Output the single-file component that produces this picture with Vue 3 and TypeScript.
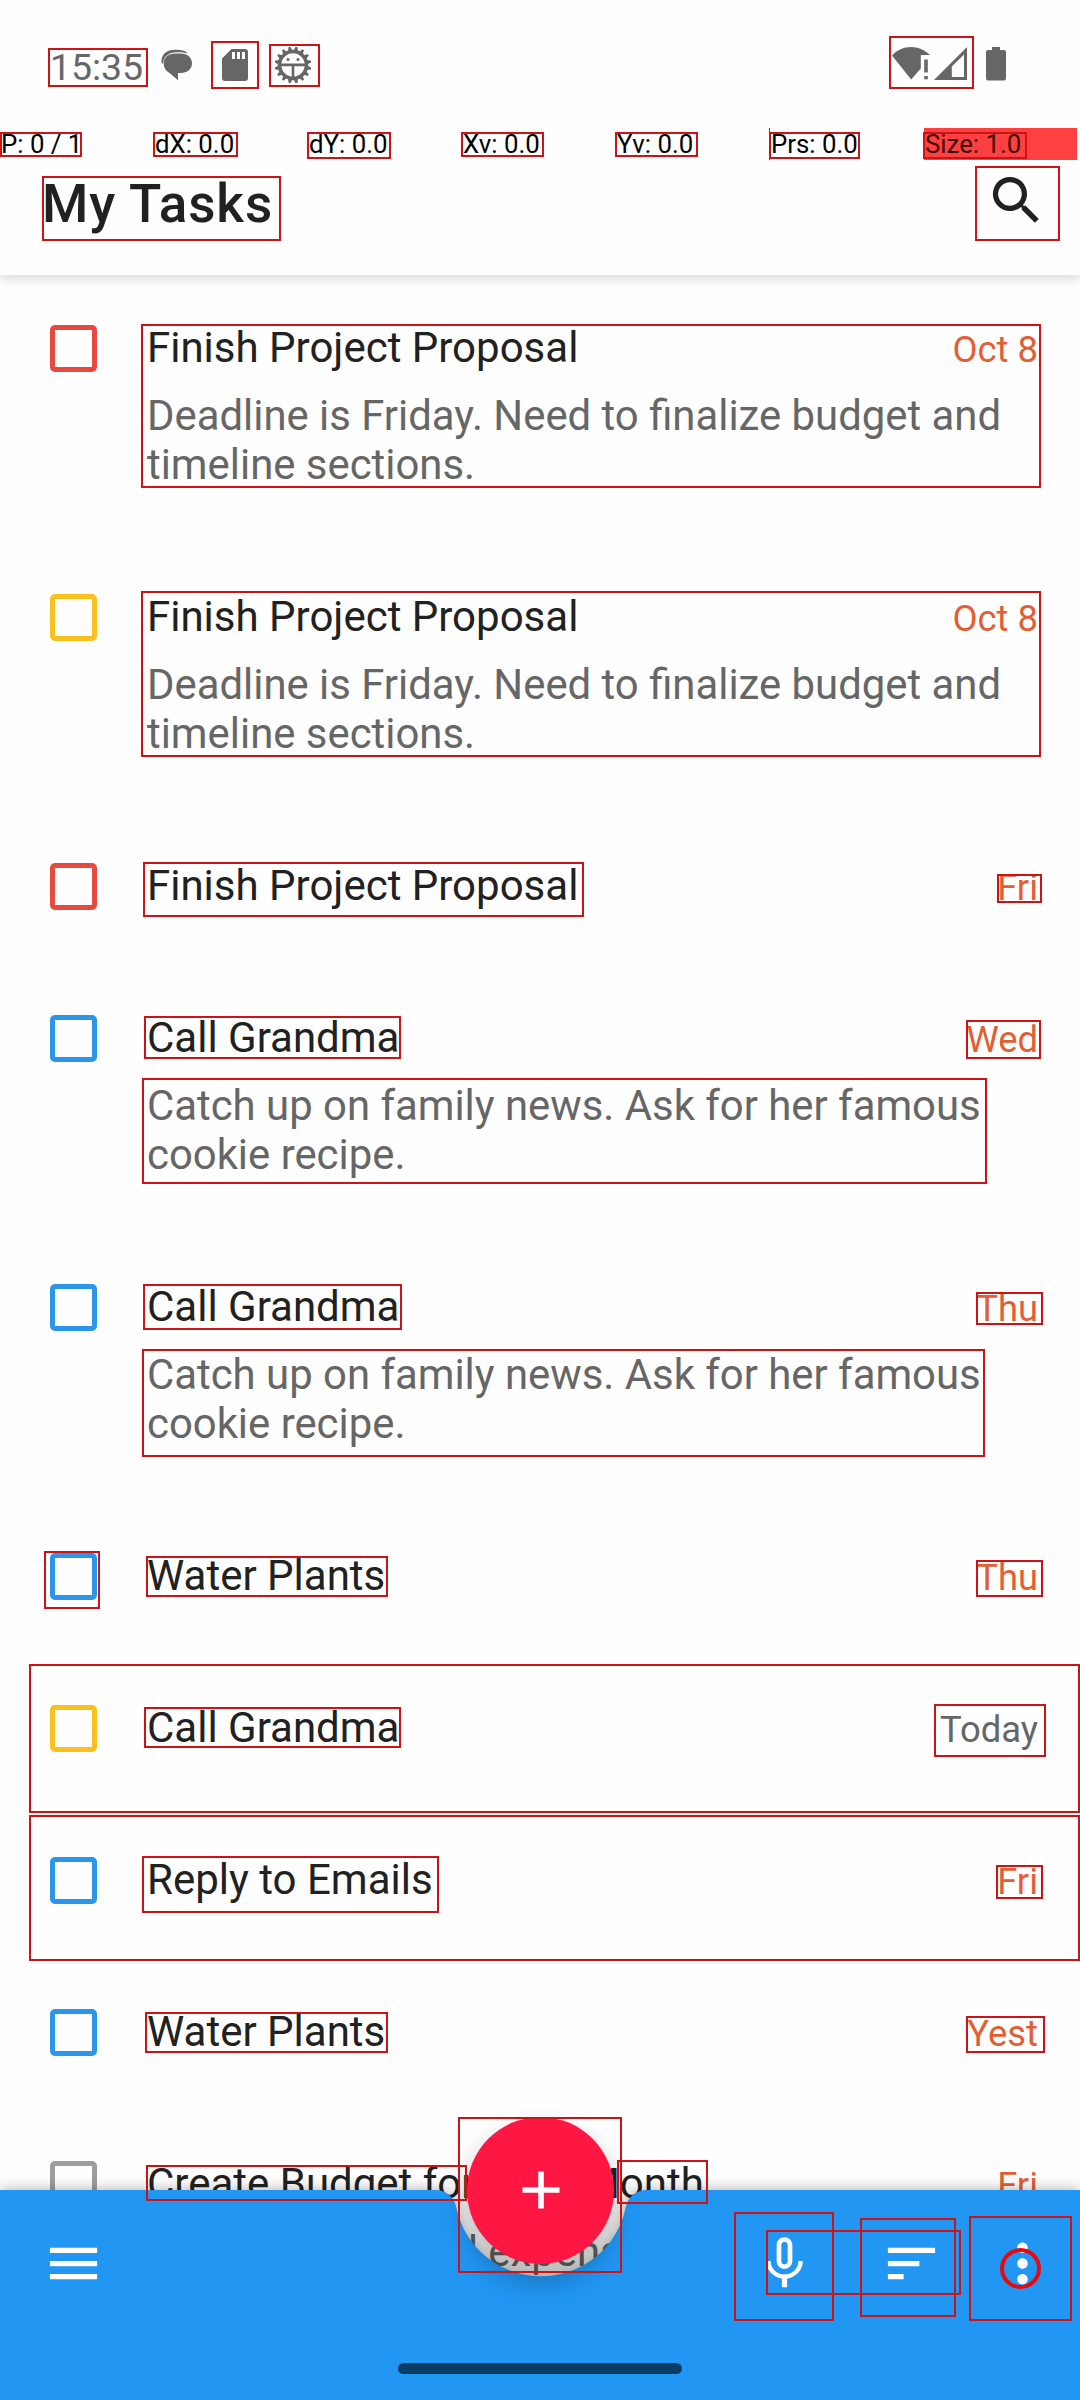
<script setup lang="ts">
interface Task {
  title: string
  due: string
  color: string
  notes?: string
  today?: boolean
}

interface Mark {
  x: number
  y: number
  w: number
  h: number
}

const RED = '#e8493f'
const YELLOW = '#f9c01e'
const BLUE = '#2b95e9'
const GREY = '#9e9e9e'

const proposal = 'Deadline is Friday. Need to finalize budget and timeline sections.'
const grandma = 'Catch up on family news. Ask for her famous cookie recipe.'

const tasks: Task[] = [
  { title: 'Finish Project Proposal', due: 'Oct 8', color: RED, notes: proposal },
  { title: 'Finish Project Proposal', due: 'Oct 8', color: YELLOW, notes: proposal },
  { title: 'Finish Project Proposal', due: 'Fri', color: RED },
  { title: 'Call Grandma', due: 'Wed', color: BLUE, notes: grandma },
  { title: 'Call Grandma', due: 'Thu', color: BLUE, notes: grandma },
  { title: 'Water Plants', due: 'Thu', color: BLUE },
  { title: 'Call Grandma', due: 'Today', color: YELLOW, today: true },
  { title: 'Reply to Emails', due: 'Fri', color: BLUE },
  { title: 'Water Plants', due: 'Yest', color: BLUE },
  { title: 'Create Budget for Next Month', due: 'Fri', color: GREY, notes: 'Track income and expenses.' },
]

const pointer = ['P: 0 / 1', 'dX: 0.0', 'dY: 0.0', 'Xv: 0.0', 'Yv: 0.0', 'Prs: 0.0', 'Size: 1.0']

// Element bounds drawn above the interface: left, top, right, bottom
const bounds: number[][] = [
  [48, 48, 148, 87], [211, 41, 259, 89], [269, 44, 320, 87], [889, 36, 974, 89],
  [0, 132, 82, 157], [153, 132, 238, 157], [307, 132, 391, 159], [461, 132, 544, 157],
  [615, 132, 698, 157], [769, 132, 860, 159], [923, 132, 1027, 159],
  [42, 176, 281, 241], [975, 166, 1060, 241],
  [141, 324, 1041, 488], [141, 591, 1041, 757],
  [143, 862, 584, 917], [997, 874, 1042, 903],
  [144, 1016, 401, 1059], [966, 1020, 1041, 1059], [142, 1078, 987, 1184],
  [143, 1284, 402, 1330], [976, 1292, 1043, 1325], [142, 1349, 985, 1457],
  [44, 1551, 100, 1609], [146, 1556, 388, 1597], [976, 1560, 1043, 1597],
  [29, 1664, 1080, 1813], [144, 1707, 401, 1748], [934, 1704, 1046, 1757],
  [29, 1815, 1080, 1961], [142, 1856, 439, 1913], [996, 1865, 1043, 1899],
  [145, 2012, 388, 2053], [966, 2016, 1045, 2053],
  [146, 2165, 467, 2201], [617, 2160, 708, 2204], [458, 2117, 622, 2273],
  [734, 2212, 834, 2321], [766, 2230, 961, 2295], [860, 2218, 956, 2317], [969, 2216, 1072, 2321],
]
const marks: Mark[] = bounds.map(([l, t, r, b]) => ({ x: l, y: t, w: r - l, h: b - t }))

const teeth = Array.from({ length: 16 }, (_, i) => i * 22.5 + 11.25)
</script>

<template>
  <div class="screen">
    <div class="status">
      <span class="clock">15:35</span>
      <svg class="chat" width="32" height="32" viewBox="0 0 32 32">
        <path d="M0.6 14.5C-0.6 6 5 0.8 14 0.8c6 0 11 1 12.500 3.600C23 3.300 19 3 15.500 3.200 8 3.400 2.600 7 1.900 14.500z" />
        <path d="M14.500 4.600h5C26.500 4.600 31 8.600 31 14.300S26.500 24 19.500 24H17v7.200L8.500 24C4.800 22 2.600 18.600 2.600 14.300c0-5.700 4.900-9.700 11.900-9.700z" />
      </svg>
      <svg class="sd" width="26" height="32" viewBox="0 0 26 32">
        <path fill-rule="evenodd" d="M9.500 0H23a3 3 0 0 1 3 3v26a3 3 0 0 1-3 3H3a3 3 0 0 1-3-3V9.500zM10 3v7h3V3zm5 0v7h3V3zm5 0v7h3V3z" />
      </svg>
      <svg class="gear" width="38" height="38" viewBox="-19 -19 38 38">
        <path v-for="a in teeth" :key="a" d="M-2.200-14 L-1-18.300 H1 L2.200-14z" :transform="`rotate(${a})`" />
        <circle r="13.500" fill="none" stroke="#666" stroke-width="3.600" />
        <path d="M-13-1.400H13V1.200H1.300V13H-1.300V1.200H-13z" />
        <circle cx="-5" cy="-5.500" r="1.500" /><circle cx="5" cy="-5.500" r="1.500" />
      </svg>
      <span class="spacer"></span>
      <svg class="wifi" width="38" height="34" viewBox="0 0 38 34">
        <path d="M0 9.500C5 4 11.500 1 19 1s14 3 19 8H28.800v13.500L19.200 33.500z" />
        <path d="M32.200 13.500h3.600v13h-3.600zM32.200 30h3.600v3.200h-3.600z" />
      </svg>
      <svg class="cell" width="33" height="33" viewBox="0 0 33 33">
        <path fill-rule="evenodd" d="M33 0V33H0zM30 7.500L17.800 19.500V30H30z" />
      </svg>
      <svg class="battery" width="20" height="34" viewBox="0 0 20 34">
        <path d="M6 0h8v3h4a2 2 0 0 1 2 2v26.500a2 2 0 0 1-2 2H2a2 2 0 0 1-2-2V5a2 2 0 0 1 2-2h4z" />
      </svg>
    </div>

    <div class="pointer">
      <span v-for="(p, i) in pointer" :key="p" :class="['cell-text', { prs: i === 5, hot: i === 6 }]">{{ p }}</span>
    </div>

    <header class="header">
      <h1>My Tasks</h1>
      <svg width="63" height="63" viewBox="0 0 24 24">
        <path fill="#212121" d="M15.500 14h-.79l-.28-.27A6.471 6.471 0 0 0 16 9.500 6.500 6.500 0 1 0 9.500 16c1.610 0 3.090-.59 4.230-1.570l.27.28v.79l5 4.990L20.490 19l-4.990-5zm-6 0C7.010 14 5 11.990 5 9.500S7.010 5 9.500 5 14 7.010 14 9.500 11.990 14 9.500 14z" />
      </svg>
    </header>

    <ul class="list">
      <li v-for="(t, i) in tasks" :key="i" class="task">
        <span class="box" :style="{ borderColor: t.color }"></span>
        <div class="body">
          <div class="line">
            <span class="title">{{ t.title }}</span>
            <span :class="['due', { today: t.today }]">{{ t.due }}</span>
          </div>
          <p v-if="t.notes" class="notes">{{ t.notes }}</p>
        </div>
      </li>
    </ul>

    <footer class="bottom">
      <svg class="bar" width="1080" height="210" viewBox="0 0 1080 210">
        <path fill="#2196f3" d="M0 0H435.600A21 21 0 0 1 456.200 16.900A86.500 86.500 0 0 0 625.800 16.900A21 21 0 0 1 646.400 0H1080V210H0z" />
      </svg>
      <div class="fab">
        <svg width="38" height="38" viewBox="0 0 38 38"><path d="M16.200 .5h5.600v15.700h15.700v5.600H21.800v15.700h-5.600V21.800H.5v-5.600h15.700z" /></svg>
      </div>
      <div class="actions">
        <svg width="63" height="63" viewBox="0 0 24 24"><path d="M3 18h18v-2H3v2zm0-5h18v-2H3v2zm0-7v2h18V6H3z" /></svg>
        <span class="spacer"></span>
        <svg width="63" height="63" viewBox="0 0 24 24"><path d="M12 14c1.660 0 2.990-1.340 2.990-3L15 5c0-1.660-1.340-3-3-3S9 3.340 9 5v6c0 1.660 1.340 3 3 3zm-1.200-9.100c0-.66.54-1.200 1.200-1.200s1.200.54 1.200 1.200l-.01 6.200c0 .66-.53 1.200-1.190 1.200s-1.200-.54-1.200-1.200V4.900zm6.500 6.100c0 3-2.540 5.100-5.300 5.100S6.700 14 6.700 11H5c0 3.410 2.720 6.230 6 6.720V21h2v-3.280c3.280-.48 6-3.300 6-6.720h-1.700z" /></svg>
        <svg class="sort" width="63" height="63" viewBox="0 0 24 24"><path d="M3 18h6v-2H3v2zM3 6v2h18V6H3zm0 7h12v-2H3v2z" /></svg>
        <svg class="more" width="63" height="63" viewBox="0 0 24 24"><path d="M12 8c1.100 0 2-.9 2-2s-.9-2-2-2-2 .9-2 2 .9 2 2 2zm0 2c-1.100 0-2 .9-2 2s.9 2 2 2 2-.9 2-2-.9-2-2-2zm0 6c-1.100 0-2 .9-2 2s.9 2 2 2 2-.9 2-2-.9-2-2-2z" /></svg>
      </div>
      <div class="handle"></div>
    </footer>

    <div
      v-for="(m, i) in marks"
      :key="i"
      class="mark"
      :style="{ left: m.x + 'px', top: m.y + 'px', width: m.w + 'px', height: m.h + 'px' }"
    ></div>
    <div class="ring"></div>
  </div>
</template>

<style>
body {
  margin: 0;
  background: #fefefe;
}
</style>

<style scoped>
.screen {
  position: relative;
  width: 1080px;
  height: 2400px;
  overflow: hidden;
  background: #fefefe;
  font-family: Roboto, 'Liberation Sans', sans-serif;
  display: flex;
  flex-direction: column;
}
svg {
  display: block;
  flex: none;
}
.spacer {
  flex: 1;
}
.status {
  height: 81px;
  flex: none;
  box-sizing: border-box;
  display: flex;
  align-items: flex-end;
  padding: 0 74px 0 50px;
  margin-bottom: 47px;
  fill: #666;
  color: #666;
}
.clock {
  width: 111px;
  font-size: 37.400px;
  line-height: 44px;
  margin-bottom: -8px;
}
.sd {
  margin-left: 29px;
}
.gear {
  margin: 0 0 -3px 26px;
}
.wifi {
  margin: 0 4px 1px 0;
}
.cell {
  margin: 0 19px 1px 0;
}
.pointer {
  height: 32px;
  flex: none;
  display: flex;
}
.cell-text {
  width: 154px;
  box-sizing: border-box;
  padding-left: 1px;
  font-size: 25.800px;
  line-height: 32px;
  color: #000;
}
.prs {
  box-shadow: -1px 0 0 #a03030;
}
.hot {
  width: 153px;
  background: #ff4040;
  color: #400808;
}
.header {
  height: 115px;
  flex: none;
  box-sizing: border-box;
  display: flex;
  justify-content: space-between;
  padding: 9px 32px 0 42px;
  background: #fefefe;
  box-shadow: 0 3px 12px rgba(0, 0, 0, 0.17);
  clip-path: inset(0 0 -30px 0);
  z-index: 1;
}
h1 {
  margin: 4px 0 0;
  font-size: 53px;
  line-height: 62px;
  font-weight: 500;
  letter-spacing: 0.9px;
  color: #212121;
}
.list {
  margin: 0;
  padding: 0;
  list-style: none;
}
.task {
  display: flex;
  padding: 48px 42px 55px 50px;
}
.box {
  flex: none;
  box-sizing: border-box;
  width: 47px;
  height: 47px;
  margin: 2px 50px 0 0;
  border: 5px solid;
  border-radius: 5px;
  align-self: flex-start;
}
.body {
  flex: 1;
}
.line {
  display: flex;
  justify-content: space-between;
  align-items: baseline;
  height: 49px;
}
.title {
  font-size: 42px;
  line-height: 49px;
  color: #212121;
}
.due {
  font-size: 36.400px;
  line-height: 43px;
  color: #e25f35;
}
.due.today {
  color: #666;
}
.notes {
  margin: 19px 0 0;
  width: 860px;
  font-size: 41.870px;
  line-height: 49px;
  color: #666;
}
.task:not(:last-child) .notes {
  height: 98px;
}
.bottom {
  position: absolute;
  left: 0;
  top: 2190px;
  width: 1080px;
  height: 210px;
  z-index: 2;
}
.bar {
  position: absolute;
  inset: 0;
  overflow: visible;
  filter: drop-shadow(0 0 7px rgba(0, 0, 0, 0.32));
}
.fab {
  position: absolute;
  left: 467px;
  top: -73.500px;
  width: 147px;
  height: 147px;
  border-radius: 50%;
  background: #ff1744;
  box-shadow: 0 16px 28px rgba(0, 0, 0, 0.28);
  display: flex;
  align-items: center;
  justify-content: center;
  fill: #fff;
}
.actions {
  position: relative;
  display: flex;
  padding: 41.500px 26px 0 42px;
  fill: #fff;
}
.sort {
  margin: 0 48px 0 64px;
}
.handle {
  position: relative;
  width: 284px;
  height: 11px;
  margin: 68.500px auto 0;
  border-radius: 6px;
  background: #0a3d64;
}
.mark {
  position: absolute;
  z-index: 3;
  box-sizing: border-box;
  border: 2px solid #cc1417;
}
.ring {
  position: absolute;
  z-index: 3;
  left: 1000px;
  top: 2248px;
  width: 41px;
  height: 41px;
  box-sizing: border-box;
  border: 4px solid #e60a0e;
  border-radius: 50%;
}
</style>
